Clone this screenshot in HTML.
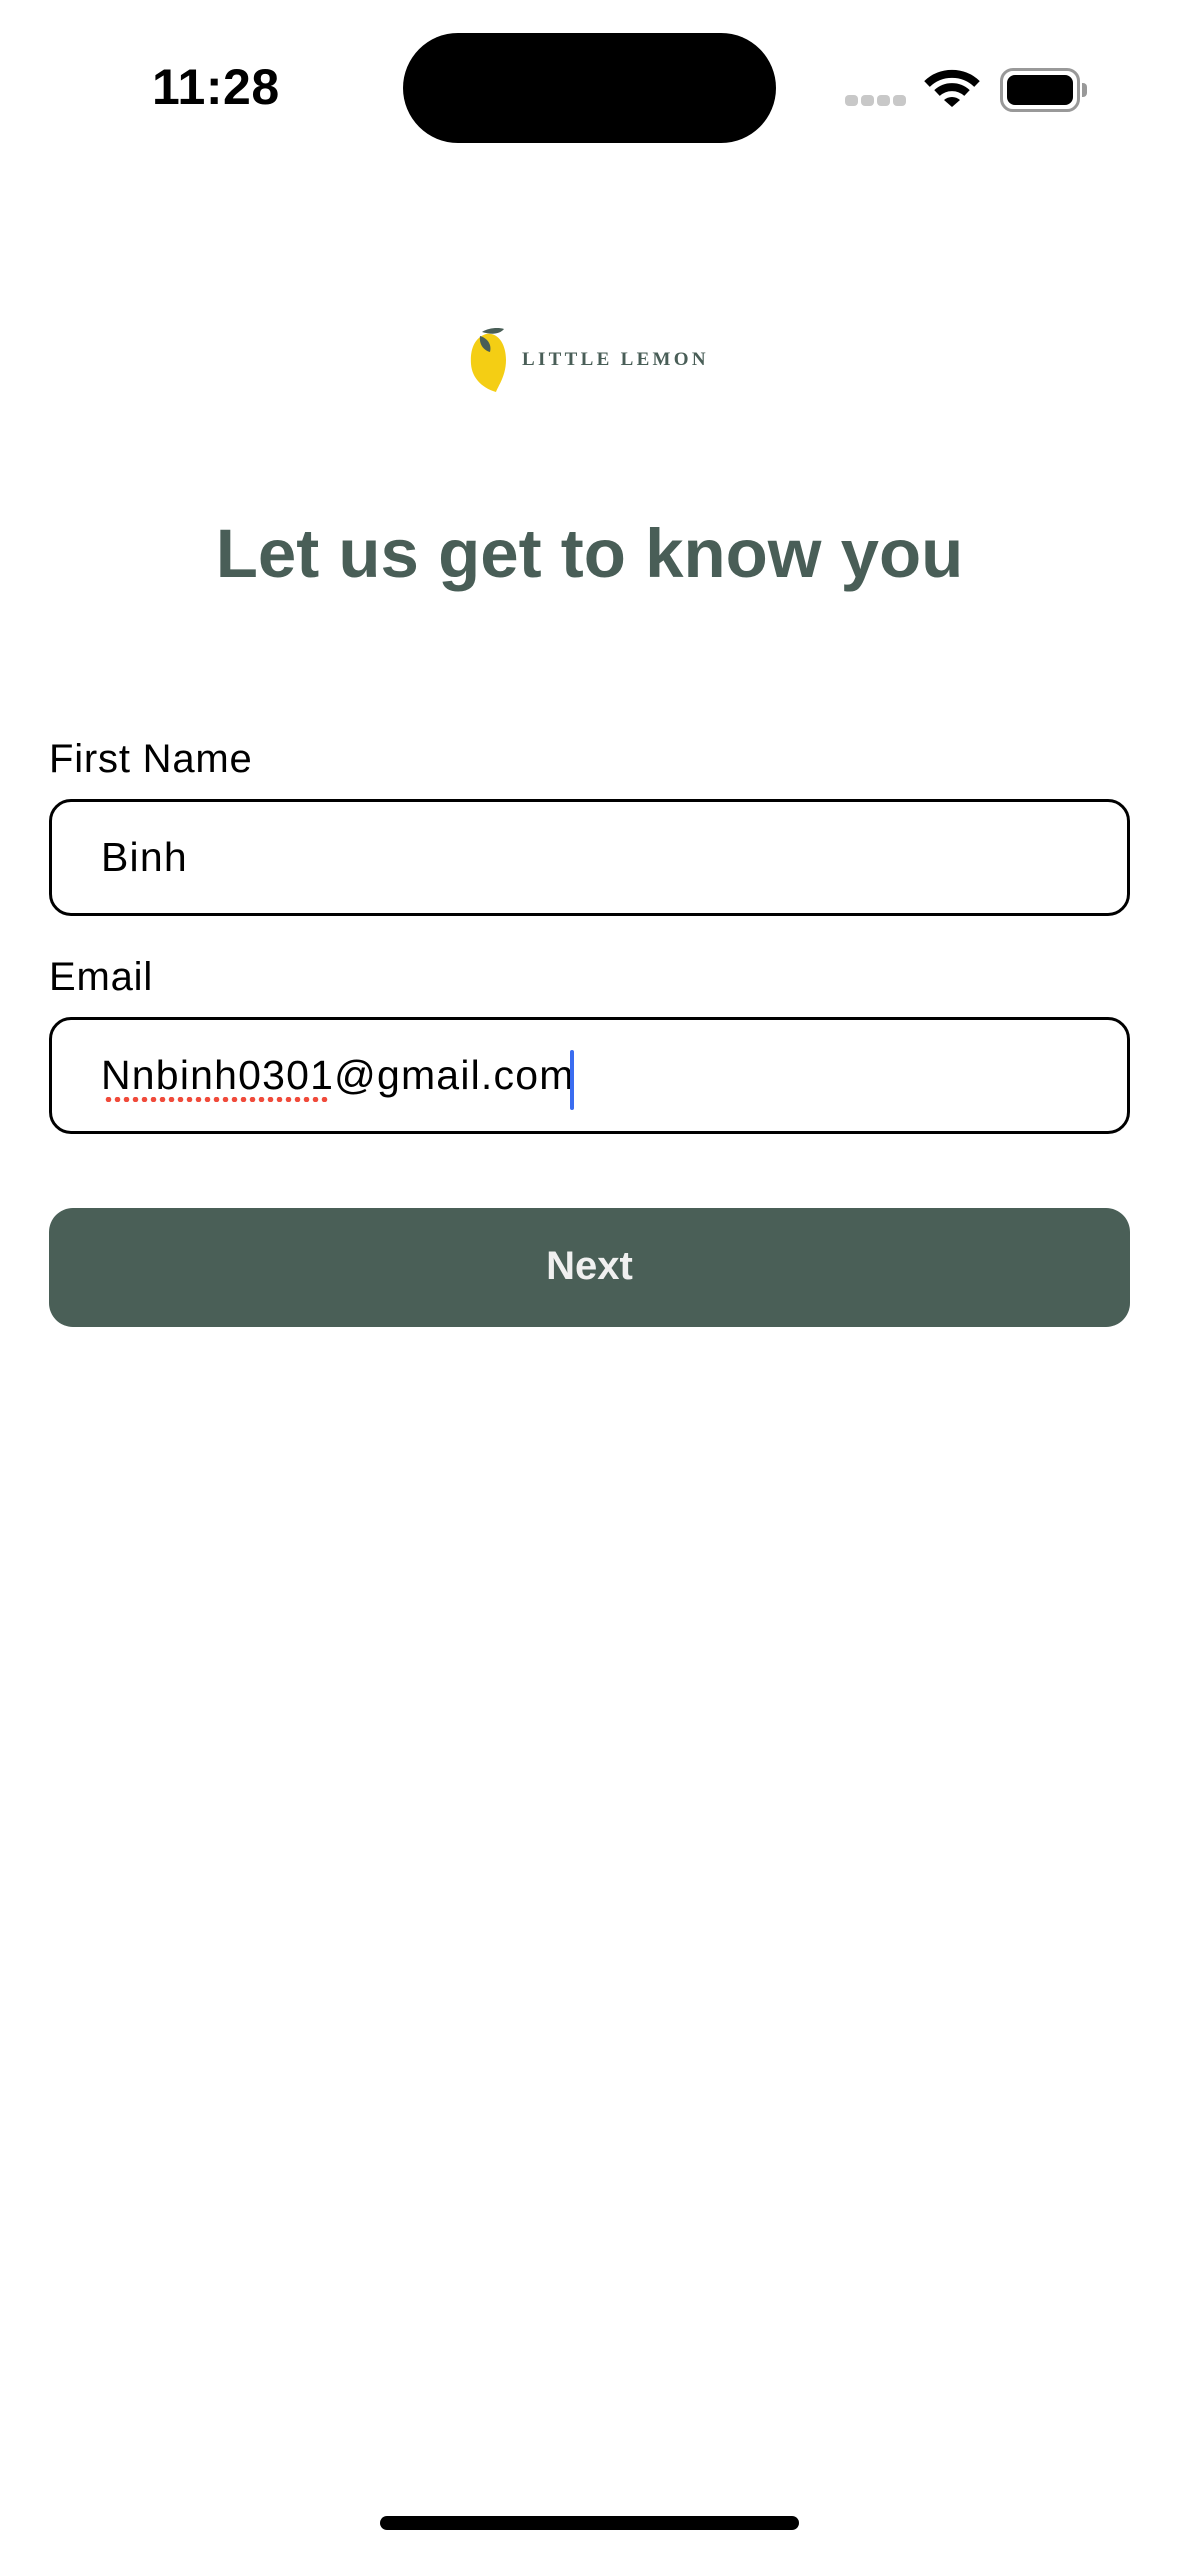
<!DOCTYPE html>
<html><head><meta charset="utf-8"><style>
html,body{margin:0;padding:0;background:#fff;}
body{width:1179px;height:2556px;position:relative;overflow:hidden;font-family:"Liberation Sans",sans-serif;}
.a{position:absolute;}
.lbl{font-size:40px;letter-spacing:0.8px;color:#000;left:49px;}
.box{left:49px;width:1075px;height:111px;border:3px solid #000;border-radius:22px;}
.val{font-size:41px;letter-spacing:1.2px;color:#000;left:101px;}
</style></head><body>
<div class="a" style="left:152px;top:58px;font-size:50px;font-weight:bold;letter-spacing:0.5px;">11:28</div>
<div class="a" style="left:403px;top:33px;width:373px;height:110px;background:#000;border-radius:55px;"></div>
<div class="a" style="left:845px;top:95px;width:13px;height:11px;background:#c8c8c8;border-radius:4px;"></div>
<div class="a" style="left:861px;top:95px;width:13px;height:11px;background:#c8c8c8;border-radius:4px;"></div>
<div class="a" style="left:877px;top:95px;width:13px;height:11px;background:#c8c8c8;border-radius:4px;"></div>
<div class="a" style="left:893px;top:95px;width:13px;height:11px;background:#c8c8c8;border-radius:4px;"></div>
<svg class="a" style="left:924px;top:68px" width="56" height="40" viewBox="0 0 56 40">
<path d="M3 16 A36 36 0 0 1 53 16" stroke="#000" stroke-width="8" fill="none"/>
<path d="M13 25 A22 22 0 0 1 43 25" stroke="#000" stroke-width="8" fill="none"/>
<path d="M20 32 L28 39 L36 32 A12 12 0 0 0 20 32Z" fill="#000"/>
</svg>
<div class="a" style="left:1000px;top:68px;width:74px;height:38px;border:3px solid #999;border-radius:13px;"></div>
<div class="a" style="left:1007px;top:75px;width:66px;height:30px;background:#000;border-radius:8px;"></div>
<div class="a" style="left:1082px;top:83px;width:5px;height:14px;background:#999;border-radius:0 4px 4px 0;"></div>
<svg class="a" style="left:468px;top:326px" width="44" height="68" viewBox="0 0 44 68">
<path d="M18 8 C6 12 2 24 3 38 C4 52 14 62 28 66 C30 60 38 50 38 34 C38 18 30 6 18 8Z" fill="#F4CE14"/>
<path d="M14 6 C20 2 30 1 36 3 C32 8 24 9 14 6Z" fill="#495E57"/>
<path d="M12 10 C19 12 24 18 22 26 C15 24 11 18 12 10Z" fill="#495E57"/>
</svg>
<div class="a" style="left:522px;top:349px;font-family:'Liberation Serif',serif;font-weight:bold;font-size:19px;letter-spacing:3.3px;color:#495E57;">LITTLE LEMON</div>
<div class="a" style="left:0;width:1179px;text-align:center;top:514px;font-size:69px;font-weight:bold;color:#495E57;">Let us get to know you</div>
<div class="a lbl" style="top:737px;">First Name</div>
<div class="a box" style="top:799px;"></div>
<div class="a val" style="top:834px;">Binh</div>
<div class="a lbl" style="top:955px;">Email</div>
<div class="a box" style="top:1017px;"></div>
<div class="a val" style="top:1052px;">Nnbinh0301@gmail.com</div>
<div class="a" style="left:104px;top:1097px;width:226px;height:5px;background:radial-gradient(circle,#f04a3a 2.5px,transparent 3px) 0 0/9px 5px repeat-x;"></div>
<div class="a" style="left:570px;top:1050px;width:4px;height:60px;background:#3a6cf0;border-radius:2px;"></div>
<div class="a" style="left:49px;top:1208px;width:1081px;height:119px;background:#4A5F57;border-radius:24px;"></div>
<div class="a" style="left:49px;width:1081px;text-align:center;top:1244px;font-size:40px;font-weight:bold;color:#f0f0f0;">Next</div>
<div class="a" style="left:380px;top:2516px;width:419px;height:14px;background:#000;border-radius:7px;"></div>
</body></html>
